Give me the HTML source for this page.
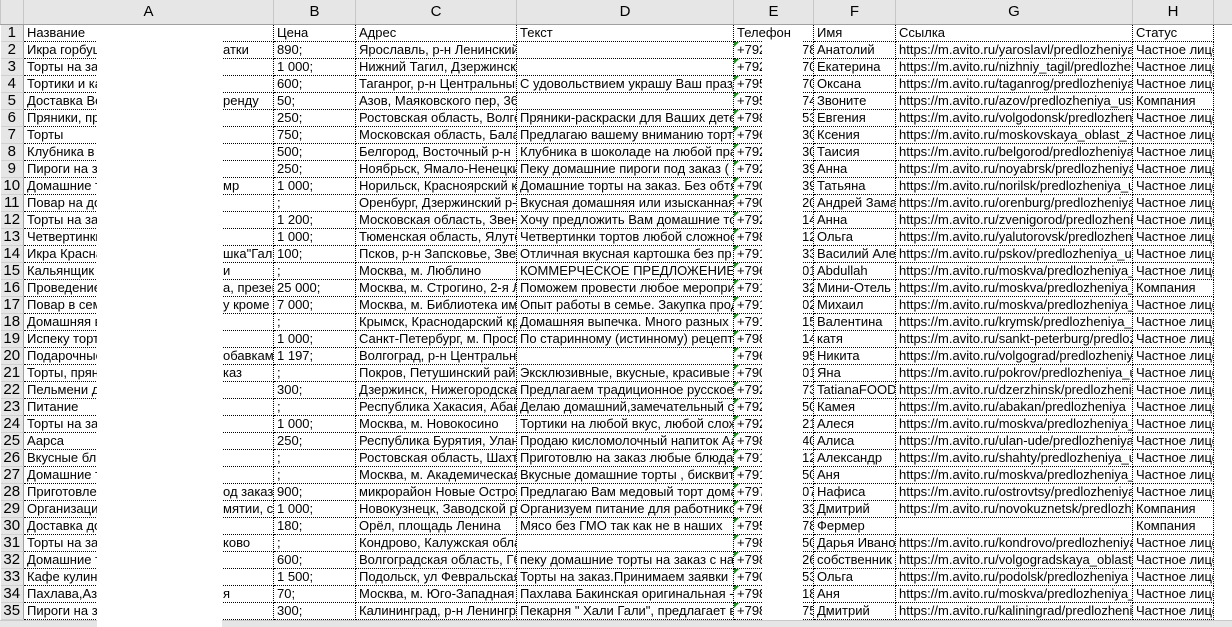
<!DOCTYPE html>
<html><head><meta charset="utf-8">
<style>
html,body{margin:0;padding:0;background:#fff;width:1232px;height:627px;overflow:hidden}
body{font-family:"Liberation Sans",Arial,sans-serif;font-size:13px;color:#000;position:relative}
table{border-collapse:collapse;table-layout:fixed;position:absolute;left:0;top:0;width:1232px}
td{height:16px;padding:0 0 0 3px;white-space:nowrap;overflow:hidden;border-right:1px dotted #000;border-bottom:1px dotted #000;line-height:16px;position:relative;font-size:13px}
tr.h td{height:24px;background:#e6e6e6;text-align:center;font-size:15px;border:1px solid #c8c8c8;border-top:none;border-bottom:1px solid #a0a0a0;padding:0}
td.n{background:#e6e6e6;border:none;border-right:1px solid #a0a0a0;border-bottom:1px solid #d0d0d0;text-align:center;padding:0;font-size:15px}
td.e::before{content:"";position:absolute;left:0;top:0;border-top:5px solid #1e8c1e;border-right:5px solid transparent}
.s{position:absolute;left:199px;top:0}
.es{position:absolute;left:68px;top:0}
.w1{position:absolute;left:97px;top:41px;width:125px;height:586px;background:#fff;z-index:5}
.w2{position:absolute;left:762px;top:41px;width:41px;height:579px;background:#fff;z-index:5}
.bot{position:absolute;left:0;top:620px;width:1232px;height:7px;background:#e6e6e6;border-top:1px solid #c8c8c8}
</style></head><body>
<table>
<colgroup><col style="width:23px"><col style="width:250px"><col style="width:82px"><col style="width:161px"><col style="width:217px"><col style="width:80px"><col style="width:82px"><col style="width:237px"><col style="width:81px"><col style="width:19px"></colgroup>
<tr class="h"><td></td><td>A</td><td>B</td><td>C</td><td>D</td><td>E</td><td>F</td><td>G</td><td>H</td><td></td></tr>
<tr><td class="n">1</td><td>Название</td><td>Цена</td><td>Адрес</td><td>Текст</td><td>Телефон</td><td>Имя</td><td>Ссылка</td><td>Статус</td><td style="border:none"></td></tr>
<tr><td class="n">2</td><td>Икра горбуши<span class="s">атки</span></td><td>890;</td><td>Ярославль, р-н Ленинский</td><td></td><td class="e">+792<span class="es">78</span></td><td>Анатолий</td><td>https://m.avito.ru/yaroslavl/predlozheniya</td><td>Частное лицо</td><td style="border:none"></td></tr>
<tr><td class="n">3</td><td>Торты на заказ</td><td>1 000;</td><td>Нижний Тагил, Дзержинский</td><td></td><td class="e">+792<span class="es">70</span></td><td>Екатерина</td><td>https://m.avito.ru/nizhniy_tagil/predlozheniya</td><td>Частное лицо</td><td style="border:none"></td></tr>
<tr><td class="n">4</td><td>Тортики и капкейки</td><td>600;</td><td>Таганрог, р-н Центральный</td><td>С удовольствием украшу Ваш праздник</td><td class="e">+795<span class="es">70</span></td><td>Оксана</td><td>https://m.avito.ru/taganrog/predlozheniya</td><td>Частное лицо</td><td style="border:none"></td></tr>
<tr><td class="n">5</td><td>Доставка Воды<span class="s">ренду</span></td><td>50;</td><td>Азов, Маяковского пер, 36</td><td></td><td class="e">+795<span class="es">74</span></td><td>Звоните</td><td>https://m.avito.ru/azov/predlozheniya_uslug</td><td>Компания</td><td style="border:none"></td></tr>
<tr><td class="n">6</td><td>Пряники, пряники</td><td>250;</td><td>Ростовская область, Волгодонск</td><td>Пряники-раскраски для Ваших детей</td><td class="e">+798<span class="es">53</span></td><td>Евгения</td><td>https://m.avito.ru/volgodonsk/predlozheniya</td><td>Частное лицо</td><td style="border:none"></td></tr>
<tr><td class="n">7</td><td>Торты</td><td>750;</td><td>Московская область, Балашиха</td><td>Предлагаю вашему вниманию торты</td><td class="e">+796<span class="es">30</span></td><td>Ксения</td><td>https://m.avito.ru/moskovskaya_oblast_z</td><td>Частное лицо</td><td style="border:none"></td></tr>
<tr><td class="n">8</td><td>Клубника в шоколаде</td><td>500;</td><td>Белгород, Восточный р-н</td><td>Клубника в шоколаде на любой праздник</td><td class="e">+792<span class="es">30</span></td><td>Таисия</td><td>https://m.avito.ru/belgorod/predlozheniya</td><td>Частное лицо</td><td style="border:none"></td></tr>
<tr><td class="n">9</td><td>Пироги на заказ</td><td>250;</td><td>Ноябрьск, Ямало-Ненецкий</td><td>Пеку домашние пироги под заказ (</td><td class="e">+792<span class="es">39</span></td><td>Анна</td><td>https://m.avito.ru/noyabrsk/predlozheniya</td><td>Частное лицо</td><td style="border:none"></td></tr>
<tr><td class="n">10</td><td>Домашние торты<span class="s">мр</span></td><td>1 000;</td><td>Норильск, Красноярский край</td><td>Домашние торты на заказ. Без обтяжки</td><td class="e">+790<span class="es">39</span></td><td>Татьяна</td><td>https://m.avito.ru/norilsk/predlozheniya_u</td><td>Частное лицо</td><td style="border:none"></td></tr>
<tr><td class="n">11</td><td>Повар на дом</td><td>;</td><td>Оренбург, Дзержинский р-н</td><td>Вкусная домашняя или изысканная</td><td class="e">+790<span class="es">20</span></td><td>Андрей Замай</td><td>https://m.avito.ru/orenburg/predlozheniya</td><td>Частное лицо</td><td style="border:none"></td></tr>
<tr><td class="n">12</td><td>Торты на заказ</td><td>1 200;</td><td>Московская область, Звенигород</td><td>Хочу предложить Вам домашние торты</td><td class="e">+792<span class="es">14</span></td><td>Анна</td><td>https://m.avito.ru/zvenigorod/predlozheniya</td><td>Частное лицо</td><td style="border:none"></td></tr>
<tr><td class="n">13</td><td>Четвертинки тортов</td><td>1 000;</td><td>Тюменская область, Ялуторовск</td><td>Четвертинки тортов любой сложности</td><td class="e">+798<span class="es">12</span></td><td>Ольга</td><td>https://m.avito.ru/yalutorovsk/predlozheniya</td><td>Частное лицо</td><td style="border:none"></td></tr>
<tr><td class="n">14</td><td>Икра Красная<span class="s">шка"Гал</span></td><td>100;</td><td>Псков, р-н Запсковье, Звеня</td><td>Отличная вкусная картошка без пр</td><td class="e">+791<span class="es">33</span></td><td>Василий Алексеев</td><td>https://m.avito.ru/pskov/predlozheniya_u</td><td>Частное лицо</td><td style="border:none"></td></tr>
<tr><td class="n">15</td><td>Кальянщик<span class="s">и</span></td><td>;</td><td>Москва, м. Люблино</td><td>КОММЕРЧЕСКОЕ ПРЕДЛОЖЕНИЕ</td><td class="e">+796<span class="es">01</span></td><td>Abdullah</td><td>https://m.avito.ru/moskva/predlozheniya_u</td><td>Частное лицо</td><td style="border:none"></td></tr>
<tr><td class="n">16</td><td>Проведение<span class="s">а, презен</span></td><td>25 000;</td><td>Москва, м. Строгино, 2-я Л</td><td>Поможем провести любое мероприятие</td><td class="e">+791<span class="es">32</span></td><td>Мини-Отель</td><td>https://m.avito.ru/moskva/predlozheniya_u</td><td>Компания</td><td style="border:none"></td></tr>
<tr><td class="n">17</td><td>Повар в семью<span class="s">у кроме</span></td><td>7 000;</td><td>Москва, м. Библиотека имени</td><td>Опыт работы в семье. Закупка продуктов</td><td class="e">+791<span class="es">02</span></td><td>Михаил</td><td>https://m.avito.ru/moskva/predlozheniya_u</td><td>Частное лицо</td><td style="border:none"></td></tr>
<tr><td class="n">18</td><td>Домашняя выпечка</td><td>;</td><td>Крымск, Краснодарский край</td><td>Домашняя выпечка. Много разных</td><td class="e">+791<span class="es">15</span></td><td>Валентина</td><td>https://m.avito.ru/krymsk/predlozheniya_u</td><td>Частное лицо</td><td style="border:none"></td></tr>
<tr><td class="n">19</td><td>Испеку торт</td><td>1 000;</td><td>Санкт-Петербург, м. Проспект</td><td>По старинному (истинному) рецепту</td><td class="e">+798<span class="es">14</span></td><td>катя</td><td>https://m.avito.ru/sankt-peterburg/predlozheniya</td><td>Частное лицо</td><td style="border:none"></td></tr>
<tr><td class="n">20</td><td>Подарочные<span class="s">обавками</span></td><td>1 197;</td><td>Волгоград, р-н Центральный</td><td></td><td class="e">+796<span class="es">95</span></td><td>Никита</td><td>https://m.avito.ru/volgograd/predlozheniya</td><td>Частное лицо</td><td style="border:none"></td></tr>
<tr><td class="n">21</td><td>Торты, пряники<span class="s">каз</span></td><td>;</td><td>Покров, Петушинский район</td><td>Эксклюзивные, вкусные, красивые</td><td class="e">+790<span class="es">01</span></td><td>Яна</td><td>https://m.avito.ru/pokrov/predlozheniya_u</td><td>Частное лицо</td><td style="border:none"></td></tr>
<tr><td class="n">22</td><td>Пельмени домашние</td><td>300;</td><td>Дзержинск, Нижегородская</td><td>Предлагаем традиционное русское</td><td class="e">+792<span class="es">73</span></td><td>TatianaFOOD</td><td>https://m.avito.ru/dzerzhinsk/predlozheniya</td><td>Частное лицо</td><td style="border:none"></td></tr>
<tr><td class="n">23</td><td>Питание</td><td>;</td><td>Республика Хакасия, Абакан</td><td>Делаю домашний,замечательный с</td><td class="e">+792<span class="es">50</span></td><td>Камея</td><td>https://m.avito.ru/abakan/predlozheniya</td><td>Частное лицо</td><td style="border:none"></td></tr>
<tr><td class="n">24</td><td>Торты на заказ</td><td>1 000;</td><td>Москва, м. Новокосино</td><td>Тортики на любой вкус, любой сложности</td><td class="e">+792<span class="es">21</span></td><td>Алеся</td><td>https://m.avito.ru/moskva/predlozheniya_u</td><td>Частное лицо</td><td style="border:none"></td></tr>
<tr><td class="n">25</td><td>Аарса</td><td>250;</td><td>Республика Бурятия, Улан-Удэ</td><td>Продаю кисломолочный напиток Аарса</td><td class="e">+798<span class="es">40</span></td><td>Алиса</td><td>https://m.avito.ru/ulan-ude/predlozheniya</td><td>Частное лицо</td><td style="border:none"></td></tr>
<tr><td class="n">26</td><td>Вкусные блюда</td><td>;</td><td>Ростовская область, Шахты</td><td>Приготовлю на заказ любые блюда</td><td class="e">+791<span class="es">12</span></td><td>Александр</td><td>https://m.avito.ru/shahty/predlozheniya_u</td><td>Частное лицо</td><td style="border:none"></td></tr>
<tr><td class="n">27</td><td>Домашние торты</td><td>;</td><td>Москва, м. Академическая</td><td>Вкусные домашние торты , бисквитные</td><td class="e">+791<span class="es">50</span></td><td>Аня</td><td>https://m.avito.ru/moskva/predlozheniya_u</td><td>Частное лицо</td><td style="border:none"></td></tr>
<tr><td class="n">28</td><td>Приготовление<span class="s">од заказ</span></td><td>900;</td><td>микрорайон Новые Острова</td><td>Предлагаю Вам медовый торт домашний</td><td class="e">+797<span class="es">07</span></td><td>Нафиса</td><td>https://m.avito.ru/ostrovtsy/predlozheniya</td><td>Частное лицо</td><td style="border:none"></td></tr>
<tr><td class="n">29</td><td>Организация<span class="s">мятии, ст</span></td><td>1 000;</td><td>Новокузнецк, Заводской р-н</td><td>Организуем питание для работников</td><td class="e">+796<span class="es">33</span></td><td>Дмитрий</td><td>https://m.avito.ru/novokuznetsk/predlozheniya</td><td>Компания</td><td style="border:none"></td></tr>
<tr><td class="n">30</td><td>Доставка домой</td><td>180;</td><td>Орёл, площадь Ленина</td><td>Мясо без ГМО так как не в наших</td><td class="e">+795<span class="es">78</span></td><td>Фермер</td><td></td><td>Компания</td><td style="border:none"></td></tr>
<tr><td class="n">31</td><td>Торты на заказ<span class="s">ково</span></td><td>;</td><td>Кондрово, Калужская область</td><td></td><td class="e">+798<span class="es">50</span></td><td>Дарья Иванова</td><td>https://m.avito.ru/kondrovo/predlozheniya</td><td>Частное лицо</td><td style="border:none"></td></tr>
<tr><td class="n">32</td><td>Домашние торты</td><td>600;</td><td>Волгоградская область, Гб</td><td>пеку домашние торты на заказ с начинкой</td><td class="e">+798<span class="es">26</span></td><td>собственник</td><td>https://m.avito.ru/volgogradskaya_oblast_</td><td>Частное лицо</td><td style="border:none"></td></tr>
<tr><td class="n">33</td><td>Кафе кулинария</td><td>1 500;</td><td>Подольск, ул Февральская</td><td>Торты на заказ.Принимаем заявки</td><td class="e">+790<span class="es">53</span></td><td>Ольга</td><td>https://m.avito.ru/podolsk/predlozheniya</td><td>Частное лицо</td><td style="border:none"></td></tr>
<tr><td class="n">34</td><td>Пахлава,Азербайджан<span class="s">я</span></td><td>70;</td><td>Москва, м. Юго-Западная</td><td>Пахлава Бакинская оригинальная -</td><td class="e">+798<span class="es">18</span></td><td>Аня</td><td>https://m.avito.ru/moskva/predlozheniya_u</td><td>Частное лицо</td><td style="border:none"></td></tr>
<tr><td class="n">35</td><td>Пироги на заказ</td><td>300;</td><td>Калининград, р-н Ленинград</td><td>Пекарня " Хали Гали", предлагает в</td><td class="e">+798<span class="es">75</span></td><td>Дмитрий</td><td>https://m.avito.ru/kaliningrad/predlozheniya</td><td>Частное лицо</td><td style="border:none"></td></tr>
</table>
<div class="bot"></div>
<div class="w1"></div>
<div class="w2"></div>
</body></html>
